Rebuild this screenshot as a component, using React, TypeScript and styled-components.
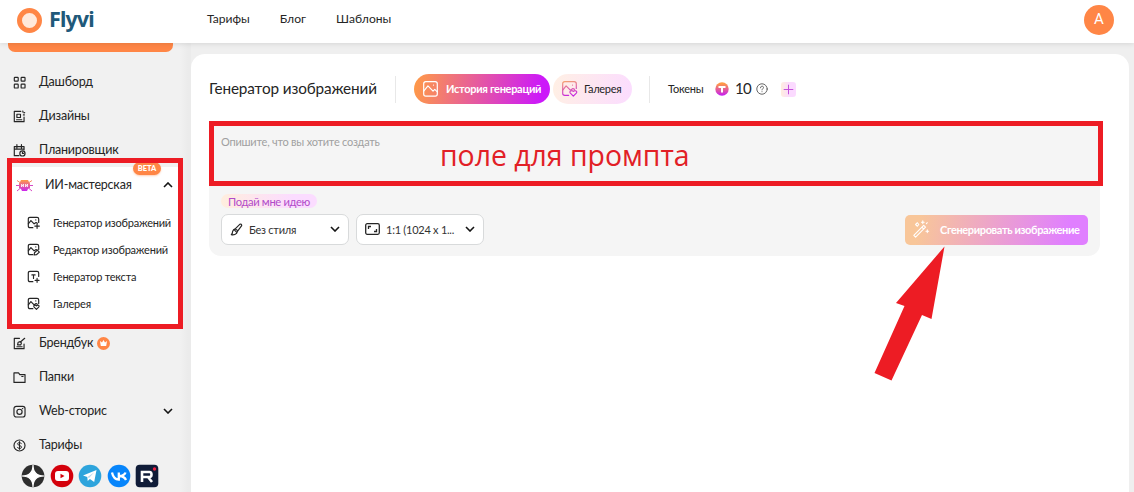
import React from 'react';
import styled, { createGlobalStyle } from 'styled-components';

const GlobalStyle = createGlobalStyle`
  * {
    box-sizing: border-box;
  }
  body {
    margin: 0;
    overflow: hidden;
    background: #efefef;
    color: #252525;
    font-family: Lato, 'Liberation Sans', sans-serif;
  }
  svg {
    display: block;
    flex: none;
  }
`;

const Page = styled.div`
  position: relative;
  width: 1134px;
  height: 492px;
  overflow: hidden;
  display: flex;
  flex-direction: column;
`;

const Header = styled.header`
  position: relative;
  z-index: 1;
  flex: none;
  height: 43px;
  padding: 0 20px 4px 17px;
  display: flex;
  align-items: center;
  background: white;
  box-shadow: 0 1px 5px rgba(0, 0, 0, 0.1);
`;

const LogoMark = styled.div`
  width: 25px;
  height: 25px;
  margin-top: 1px;
  border: 5px solid #ff8646;
  border-radius: 50%;
  background: #ffe9dc;
`;

const LogoText = styled.span`
  width: 46px;
  margin-left: 7px;
  padding-bottom: 1px;
  color: #20597a;
  font: 700 21.5px/30px 'Noto Sans', sans-serif;
  letter-spacing: -0.9px;
`;

const Nav = styled.nav`
  margin-left: 112px;
  padding-bottom: 3px;
  display: flex;
  gap: 30px;
  font-size: 12.1px;
`;

const Avatar = styled.div`
  width: 30px;
  height: 30px;
  margin: 0 0 0 auto;
  border-radius: 50%;
  background: #ff8646;
  color: white;
  font: 15px/29px Roboto, sans-serif;
  text-align: center;
`;

const Body = styled.div`
  flex: 1;
  min-height: 0;
  display: flex;
`;

const Sidebar = styled.aside`
  width: 191px;
  flex: none;
  padding-right: 11px;
  background: linear-gradient(90deg, #f1f1f1 180px, #ebebeb 188px);
`;

const CreateButton = styled.div`
  width: 165px;
  height: 9px;
  margin: 0 0 13px 8px;
  border-radius: 0 0 7px 7px;
  background: #ff8646;
`;

const MenuItem = styled.div`
  height: 34px;
  padding: 0 7px 0 13px;
  display: flex;
  align-items: center;
  font-size: 12.5px;
  letter-spacing: -0.2px;
  svg:last-child:not(:first-child) {
    margin-left: auto;
  }
`;

const MenuLabel = styled.span<{ $gap?: number }>`
  margin-left: ${({ $gap = 13 }) => $gap}px;
  padding-bottom: 1px;
  white-space: nowrap;
`;

const Workshop = styled.section`
  position: relative;
  height: 159px;
  margin: 0 1px 0 12px;
  background: white;
`;

const WorkshopTitle = styled(MenuItem)`
  height: 36px;
  padding: 0 6px 0 4px;
`;

const Beta = styled.span`
  position: absolute;
  top: -5px;
  left: 121px;
  width: 28px;
  height: 13px;
  border-radius: 7px;
  background: #ff8646;
  box-shadow: 0 1px 2px rgba(255, 134, 70, 0.4);
  color: white;
  font-size: 7.5px;
  font-weight: 900;
  line-height: 13px;
  text-align: center;
`;

const SubMenu = styled.div`
  padding-top: 6px;
`;

const SubItem = styled.div`
  height: 27px;
  padding-left: 15px;
  display: flex;
  align-items: center;
  gap: 13px;
  font-size: 11px;
  letter-spacing: -0.22px;
  white-space: nowrap;
`;

const Crown = styled.span`
  width: 13px;
  height: 13px;
  margin-left: 4px;
  display: grid;
  place-items: center;
  border-radius: 50%;
  background: #ff8646;
`;

const Socials = styled.div`
  display: flex;
  gap: 4.6px;
  padding: 2px 0 0 21px;
`;

const Panel = styled.main`
  width: 938px;
  margin-top: 11px;
  padding: 20px 30px 0 18px;
  border-radius: 14px 14px 0 0;
  background: white;
`;

const Toolbar = styled.div`
  height: 30px;
  display: flex;
  align-items: center;
`;

const Title = styled.h1`
  width: 186px;
  margin: 0;
  padding-bottom: 2px;
  font-size: 15.3px;
  font-weight: 400;
  letter-spacing: -0.12px;
  white-space: nowrap;
`;

const Divider = styled.span`
  width: 1px;
  height: 27px;
  background: #e8e8e8;
`;

const Tab = styled.button<{ $active?: boolean }>`
  width: ${({ $active }) => ($active ? 136 : 79)}px;
  height: 30px;
  margin-left: ${({ $active }) => ($active ? 18 : 3)}px;
  margin-right: ${({ $active }) => ($active ? 0 : 17)}px;
  padding: 0 0 1px 8px;
  display: flex;
  align-items: center;
  gap: ${({ $active }) => ($active ? 7 : 6)}px;
  border: none;
  border-radius: 15px;
  background: ${({ $active }) =>
    $active
      ? 'linear-gradient(100deg, #ff9b45, #cc19f9 92%)'
      : 'linear-gradient(100deg, #fff0e4, #fbdcff)'};
  color: ${({ $active }) => ($active ? 'white' : '#252525')};
  font: ${({ $active }) => ($active ? 700 : 400)} 11px Lato, sans-serif;
  letter-spacing: -0.3px;
  white-space: nowrap;
`;

const Tokens = styled.div`
  margin-left: 18px;
  display: flex;
  align-items: center;
  font-size: 11px;
`;

const TokensLabel = styled.span`
  width: 47px;
  padding-bottom: 2px;
  letter-spacing: -0.2px;
`;

const TokenCount = styled.span`
  width: 21px;
  margin-left: 6px;
  padding-bottom: 2px;
  font-size: 15px;
  letter-spacing: -0.6px;
`;

const AddTokens = styled.button`
  width: 15px;
  height: 15px;
  margin-left: 13px;
  padding: 0;
  display: grid;
  place-items: center;
  border: none;
  border-radius: 3px;
  background: linear-gradient(90deg, #ffeedf, #fbdaff 60%);
`;

const PromptForm = styled.section`
  width: 891px;
  height: 135px;
  margin-top: 17px;
  padding: 14px 12px 0;
  border-radius: 12px;
  background: #f5f5f5;
`;

const Placeholder = styled.div`
  height: 59px;
  color: #a0a0a0;
  font-size: 11px;
  line-height: 14px;
  letter-spacing: -0.23px;
`;

const Idea = styled.button`
  height: 14px;
  padding: 0 7px;
  display: block;
  border: none;
  border-radius: 7px;
  background: linear-gradient(90deg, #ffeede, #fbdcff 75%);
  color: #b14bc9;
  font: 11.2px/13px Lato, sans-serif;
  letter-spacing: -0.35px;
`;

const Controls = styled.div`
  margin-top: 6px;
  display: flex;
  align-items: center;
  gap: 7px;
`;

const Select = styled.button<{ $gap: number }>`
  width: 128px;
  height: 31px;
  padding: 0 8px 1px;
  display: flex;
  align-items: center;
  gap: ${({ $gap }) => $gap}px;
  border: 1px solid #d8dadb;
  border-radius: 7px;
  background: white;
  color: #333;
  font: 11px Lato, sans-serif;
  letter-spacing: -0.25px;
  white-space: nowrap;
  svg:last-child {
    margin-left: auto;
  }
`;

const Generate = styled.button`
  width: 183px;
  height: 30px;
  margin-left: auto;
  padding: 0 0 1px 7px;
  display: flex;
  align-items: center;
  gap: 10px;
  border: none;
  border-radius: 5px;
  background: linear-gradient(100deg, #f8c699 8%, #e07fff 88%);
  color: white;
  font: 700 11px Lato, sans-serif;
  letter-spacing: -0.37px;
  white-space: nowrap;
`;

// Red marks lie over the page
const MenuFrame = styled.div`
  position: absolute;
  z-index: 2;
  left: 7px;
  top: 158px;
  width: 176px;
  height: 171px;
  border: 5px solid #ed1c24;
`;

const PromptFrame = styled.div`
  position: absolute;
  left: 209px;
  top: 121px;
  width: 894px;
  height: 65px;
  border: 5px solid #ed1c24;
`;

const PromptNote = styled.span`
  position: absolute;
  left: 440px;
  top: 137px;
  color: #e22026;
  font: 28.4px/37px 'Open Sans', sans-serif;
  white-space: nowrap;
`;

const Arrow = styled.svg`
  position: absolute;
  left: 870px;
  top: 244px;
`;

interface IconProps {
  size?: number;
  color?: string;
  width?: number;
  children: React.ReactNode;
}

const Icon: React.FC<IconProps> = ({
  size = 13,
  color = '#252525',
  width = 1.8,
  children,
}) => (
  <svg
    width={size}
    height={size}
    viewBox="0 0 20 20"
    fill="none"
    stroke={color}
    strokeWidth={width}
    strokeLinecap="round"
    strokeLinejoin="round"
  >
    {children}
  </svg>
);

const Chevron: React.FC<{ up?: boolean }> = ({ up }) => (
  <svg width="10" height="6" viewBox="0 0 10 6" fill="none" stroke="#151515" strokeWidth="1.6">
    <path d={up ? 'M1 5l4-4 4 4' : 'M1 1l4 4 4-4'} />
  </svg>
);

const frame = (
  <>
    <path d="M9 18H4.500Q2 18 2 15.500V4.500Q2 2 4.500 2H15.500Q18 2 18 4.500V10" />
    <path d="M2 12l4-5 5 5 3-2 2 1M13.500 6h.1" />
  </>
);

const heart = (
  <path d="M14.500 19l-3.500-3.500c-1.700-2 1.300-4.500 3.500-2 2.200-2.500 5.200 0 3.500 2z" />
);

const TokenIcon = () => (
  <svg width="14" height="14" viewBox="0 0 14 14">
    <defs>
      <linearGradient id="token" x2="0" y2="1">
        <stop offset=".1" stopColor="#ff9a45" />
        <stop offset="1" stopColor="#c51cf4" />
      </linearGradient>
    </defs>
    <circle cx="7" cy="7" r="6.700" fill="url(#token)" />
    <path d="M3.500 5h7M7 5v5.500" stroke="white" strokeWidth="2" />
  </svg>
);

const RobotIcon = () => (
  <svg width="17" height="13" viewBox="0 0 17 13">
    <defs>
      <linearGradient id="robot" x2="0" y2="1">
        <stop stopColor="#ff9a45" />
        <stop offset="1" stopColor="#ca25ef" />
      </linearGradient>
    </defs>
    <path d="M1 1.500l3 2M16 1.500l-3 2" stroke="#f98f62" />
    <path d="M0 6.500h3M17 6.500h-3M1 12l3-2.500M16 12l-3-2.500" stroke="#d748c4" />
    <path d="M5 1h7l1 2q1.500 1 1 4v2l-2 1-1 2H6l-1-2-2-1V7q-.5-3 1-4z" fill="url(#robot)" />
    <path d="M5.500 5v3l2-3v3M9.500 5v3l2-3v3" stroke="#fff" strokeWidth=".8" fill="none" />
  </svg>
);

const Social: React.FC<{ color: string; square?: boolean; children: React.ReactNode }> = ({
  color,
  square,
  children,
}) => (
  <svg width="24" height="24" viewBox="0 0 24 24">
    <rect x=".7" y=".7" width="22.600" height="22.600" rx={square ? 4 : 11.3} fill={color} />
    {children}
  </svg>
);

const App: React.FC = () => (
  <>
    <GlobalStyle />
    <Page>
      <Header>
        <LogoMark />
        <LogoText>Flyvi</LogoText>
        <Nav>
          <span>Тарифы</span>
          <span>Блог</span>
          <span>Шаблоны</span>
        </Nav>
        <Avatar>A</Avatar>
      </Header>
      <Body>
        <Sidebar>
          <CreateButton />
          <MenuItem>
            <Icon>
              <rect x="2" y="2" width="6" height="6" rx="1" />
              <rect x="12.500" y="2" width="6" height="6" rx="1" />
              <rect x="2" y="12.500" width="6" height="6" rx="1" />
              <rect x="12.500" y="12.500" width="6" height="6" rx="1" />
            </Icon>
            <MenuLabel>Дашборд</MenuLabel>
          </MenuItem>
          <MenuItem>
            <Icon>
              <path d="M12 2H2v16h15v-7M6 6.500h5.500v5H6zM5.500 15h8M15 1.500l.5 2M18 4l-1 .5M16 7.500h1.500" />
            </Icon>
            <MenuLabel>Дизайны</MenuLabel>
          </MenuItem>
          <MenuItem>
            <Icon>
              <path d="M9 18H2V4h15v5M2 8h15M6 1v5M13 1v5" />
              <circle cx="14.500" cy="14.500" r="4" />
              <path d="M14.500 12.500v2h2" />
            </Icon>
            <MenuLabel>Планировщик</MenuLabel>
          </MenuItem>
          <Workshop>
            <Beta>BETA</Beta>
            <WorkshopTitle>
              <RobotIcon />
              <MenuLabel $gap={12}>ИИ-мастерская</MenuLabel>
              <Chevron up />
            </WorkshopTitle>
            <SubMenu>
              <SubItem>
                <Icon>
                  {frame}
                  <path d="M15.500 12v7M12 15.500h7" />
                </Icon>
                Генератор изображений
              </SubItem>
              <SubItem>
                <Icon>
                  {frame}
                  <path d="M11 18.500l.5-3.500 4.500-4 3 3-4.500 4z" />
                </Icon>
                Редактор изображений
              </SubItem>
              <SubItem>
                <Icon>
                  <path d="M9 18H4.500Q2 18 2 15.500V4.500Q2 2 4.500 2H15.500Q18 2 18 4.500V10" />
                  <path d="M7.500 7.500h5M10 7.500V13M15.500 13v6M12.500 16h6" />
                </Icon>
                Генератор текста
              </SubItem>
              <SubItem>
                <Icon>
                  {frame}
                  {heart}
                </Icon>
                Галерея
              </SubItem>
            </SubMenu>
          </Workshop>
          <MenuItem>
            <Icon>
              <path d="M10 2H2v16h15v-7M6 15h8M7 12l1-4 3-1 2 2-1 3zM11 8l7-6" />
            </Icon>
            <MenuLabel>Брендбук</MenuLabel>
            <Crown>
              <svg width="7" height="6" viewBox="0 0 7 6" fill="white">
                <path d="M0 1l2 1.500L3.500 0 5 2.500 7 1 6.200 6H.8z" />
              </svg>
            </Crown>
          </MenuItem>
          <MenuItem>
            <Icon>
              <path d="M1.500 17.500V3h7l2 2.500h8v12zM13.500 8.500h2" />
            </Icon>
            <MenuLabel>Папки</MenuLabel>
          </MenuItem>
          <MenuItem>
            <Icon>
              <rect x="1.500" y="2" width="17" height="16.500" rx="3.500" />
              <circle cx="10" cy="10.500" r="4" />
              <path d="M14.500 5.500h.5" />
            </Icon>
            <MenuLabel>Web-сторис</MenuLabel>
            <Chevron />
          </MenuItem>
          <MenuItem>
            <Icon>
              <circle cx="10" cy="10" r="8.500" />
              <path d="M13 7c-1-2-6-2-6 .5S13 9.500 13 12.500s-5 3-6 .5M10 4v12" strokeWidth="1.500" />
            </Icon>
            <MenuLabel>Тарифы</MenuLabel>
          </MenuItem>
          <Socials>
            <Social color="#2e2e2e">
              <path
                d="M12 1q0 11 11 11-11 0-11 11Q12 12 1 12 12 12 12 1z"
                fill="white"
                stroke="white"
                strokeWidth="1.2"
              />
            </Social>
            <Social color="#d4000b">
              <rect x="5" y="7" width="14" height="10" rx="3" fill="white" />
              <path d="M10.500 9.700v4.600l4-2.300z" fill="#d4000b" />
            </Social>
            <Social color="#2ea4dc">
              <path d="M5 11.500L18.500 6l-2.300 12-4.300-3-2.200 2-.4-4z" fill="white" />
              <path d="M9.500 13L16 8.500 11 14z" fill="#b9d9ec" />
            </Social>
            <Social color="#0785fb">
              <path
                d="M5 8.500q1.500 7 6.800 7v-7M18.500 8.500q-1 3-6 3.500 5 .5 6.500 4"
                fill="none"
                stroke="white"
                strokeWidth="2.300"
              />
            </Social>
            <Social color="#101c38" square>
              <path
                d="M7 18V8h7.500q2 0 2 2.500T14.500 13H7M13 13l4 5"
                fill="none"
                stroke="white"
                strokeWidth="2.600"
              />
              <circle cx="19.500" cy="5" r="1.700" fill="#ef2242" />
            </Social>
          </Socials>
        </Sidebar>
        <Panel>
          <Toolbar>
            <Title>Генератор изображений</Title>
            <Divider />
            <Tab $active>
              <Icon size={17} color="white" width={1.4}>
                <rect x="2" y="2" width="16" height="17" rx="2.500" />
                <path d="M2 13l5-6 6 6 2-2 3 3M13.500 6h.1" />
              </Icon>
              История генераций
            </Tab>
            <Tab>
              <Icon size={17} color="url(#gallery)" width={1.4}>
                <defs>
                  <linearGradient id="gallery" gradientUnits="userSpaceOnUse" x1="4" y1="1" x2="8" y2="19">
                    <stop stopColor="#f6a56e" />
                    <stop offset="1" stopColor="#c527e0" />
                  </linearGradient>
                </defs>
                {frame}
                {heart}
              </Icon>
              Галерея
            </Tab>
            <Divider />
            <Tokens>
              <TokensLabel>Токены</TokensLabel>
              <TokenIcon />
              <TokenCount>10</TokenCount>
              <Icon size={12} color="#555" width={1.5}>
                <circle cx="10" cy="10" r="8.700" />
                <path d="M7.500 8c0-4 5-3.500 5-.5 0 2-2.500 2-2.500 4M10 14.500v.1" />
              </Icon>
              <AddTokens>
                <Icon size={11} color="#c250da" width={1.8}>
                  <path d="M10 2v16M2 10h16" />
                </Icon>
              </AddTokens>
            </Tokens>
          </Toolbar>
          <PromptForm>
            <Placeholder>Опишите, что вы хотите создать</Placeholder>
            <Idea>Подай мне идею</Idea>
            <Controls>
              <Select $gap={6}>
                <Icon size={13}>
                  <path d="M8 9l7-7q3-1 3 2l-6 8zM8 9l4 3-2 4q-3 3-8 2 2-2 2-5 1-3 4-4M7 11l3 3" />
                </Icon>
                Без стиля
                <Chevron />
              </Select>
              <Select $gap={6}>
                <svg width="15" height="12" viewBox="0 0 15 12" fill="none" stroke="#252525" strokeWidth="1.3">
                  <rect x=".7" y=".7" width="13.600" height="10.600" rx="1.500" />
                  <path d="M3.500 6V3.500H6M11.500 6v2.500H9" />
                </svg>
                1:1 (1024 x 1...
                <Chevron />
              </Select>
              <Generate>
                <Icon size={18} color="white" width={1.2}>
                  <path d="M2 17L13 6l2 2L4 19zM11 8l2 2M6 3l1.500 2L6 7 4 5zM12 1v3M10.500 2.500h3M17 11v3M15.500 12.500h3M16 4l1-1" />
                </Icon>
                Сгенерировать изображение
              </Generate>
            </Controls>
          </PromptForm>
        </Panel>
      </Body>
      <MenuFrame />
      <PromptFrame />
      <PromptNote>поле для промпта</PromptNote>
      <Arrow width="80" height="140" viewBox="870 244 80 140">
        <path d="M944.500 246.500L896 303L904.500 306L874.500 373L891.500 380.500L922 315L931.500 319z" fill="#ed1c24" />
      </Arrow>
    </Page>
  </>
);

export default App;
